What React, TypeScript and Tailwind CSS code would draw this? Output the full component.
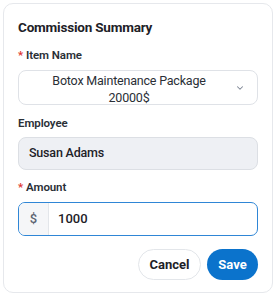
import { ChevronDown } from "lucide-react";

export default function App() {
  return (
    <div
      className="w-[276px] h-[296px] bg-white p-[3px]"
      style={{ fontFamily: "Roboto, 'Noto Sans', sans-serif" }}
    >
      <div className="h-full rounded-[10px] border border-[#e6e8ec] bg-white px-[14px] pt-[13px]">
        {/* Header */}
        <h2 className="text-[13.5px] leading-[20px] font-bold tracking-[-0.2px] text-[#1d2127]">
          Commission Summary
        </h2>

        {/* Item name */}
        <label className="mt-[10px] flex items-center gap-[3px] text-[11.5px] leading-[16px] font-semibold tracking-[-0.1px] text-[#2a2f36]">
          <span className="text-[#e0342f]">*</span>
          Item Name
        </label>
        <div className="mt-[7px] flex h-[35px] items-center rounded-[8px] border border-[#dfe2e7] bg-white">
          <div className="flex-1 pl-[4px] pt-[2px] text-center text-[12.5px] leading-[17px] tracking-[-0.2px] text-[#2a2f36]">
            Botox Maintenance Package
            <br />
            20000$
          </div>
          <ChevronDown className="mr-[12px] h-[10px] w-[10px] text-[#7b8492]" strokeWidth={2.5} />
        </div>

        {/* Employee */}
        <label className="mt-[10px] block text-[11.5px] leading-[16px] font-semibold tracking-[-0.1px] text-[#2a2f36]">
          Employee
        </label>
        <div className="mt-[6px] flex h-[33px] items-center rounded-[8px] border border-[#dcdfe4] bg-[#eef0f4] px-[10px] text-[12.5px] font-medium tracking-[-0.2px] text-[#1d2127]">
          Susan Adams
        </div>

        {/* Amount */}
        <label className="mt-[9px] flex items-center gap-[3px] text-[11.5px] leading-[16px] font-semibold tracking-[-0.1px] text-[#2a2f36]">
          <span className="text-[#e0342f]">*</span>
          Amount
        </label>
        <div className="mt-[7px] flex h-[34px] items-stretch overflow-hidden rounded-[7px] border-[1.5px] border-[#2f86d6] bg-white">
          <div className="flex w-[30px] items-center justify-center border-r border-[#e3e6ea] bg-[#f5f6f8] text-[13px] font-medium text-[#5b6370]">
            $
          </div>
          <div className="flex items-center pl-[9px] text-[13px] font-medium text-[#1d2127]">
            1000
          </div>
        </div>

        {/* Actions */}
        <div className="mt-[13px] flex justify-end gap-[6px]">
          <button className="h-[31px] w-[63px] rounded-full border border-[#e3e6ea] bg-white text-[13px] font-bold text-[#1d2127]">
            Cancel
          </button>
          <button className="h-[31px] w-[51px] rounded-full bg-[#0b73cc] text-[13px] font-bold text-white">
            Save
          </button>
        </div>
      </div>
    </div>
  );
}
